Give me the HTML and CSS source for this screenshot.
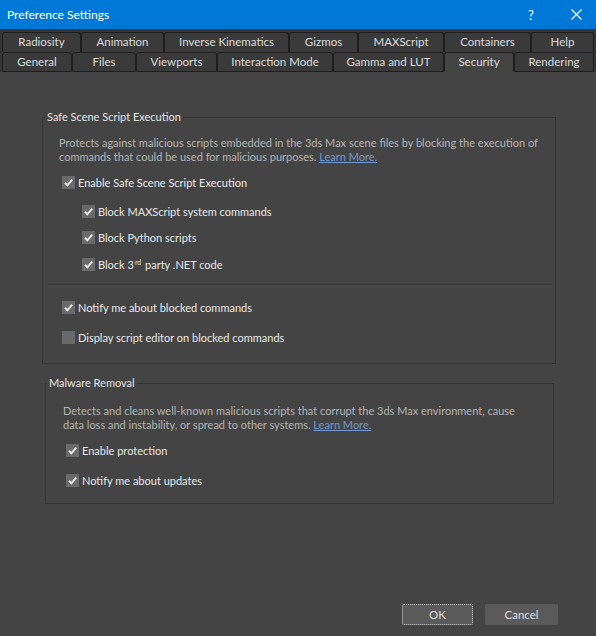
FILE: index.html
```html
<!DOCTYPE html>
<html lang="en">
<head>
<meta charset="utf-8">
<title>Preference Settings</title>
<link rel="stylesheet" href="styles.css">
</head>
<body>
<div class="window">
  <header class="titlebar">
    <span class="title">Preference Settings</span>
    <div class="caption">
      <span class="cap-btn cap-help">?</span>
      <span class="cap-btn cap-close"><svg width="11" height="11" viewBox="0 0 11 11"><path d="M0.5 0.5 10.5 10.5 M10.5 0.5 0.5 10.5" stroke="#fff" stroke-width="1.1" fill="none"/></svg></span>
    </div>
  </header>

  <nav class="tabs">
    <div class="tab-row row-back">
      <div class="tab">Radiosity</div>
      <div class="tab">Animation</div>
      <div class="tab">Inverse Kinematics</div>
      <div class="tab">Gizmos</div>
      <div class="tab">MAXScript</div>
      <div class="tab">Containers</div>
      <div class="tab">Help</div>
    </div>
    <div class="tab-row row-front">
      <div class="tab">General</div>
      <div class="tab">Files</div>
      <div class="tab">Viewports</div>
      <div class="tab">Interaction Mode</div>
      <div class="tab">Gamma and LUT</div>
      <div class="tab active">Security</div>
      <div class="tab">Rendering</div>
    </div>
  </nav>

  <main class="content">
    <fieldset class="group group-safe">
      <legend>Safe Scene Script Execution</legend>
      <p class="desc">Protects against malicious scripts embedded in the 3ds Max scene files by blocking the execution of<br>commands that could be used for malicious purposes. <a href="#">Learn More.</a></p>
      <label class="check row-main"><span class="box"><svg width="13" height="13" viewBox="0 0 13 13"><path d="M3 6.8 5.4 9.3 10.2 3.6" stroke="#e6e6e6" stroke-width="2" fill="none"/></svg></span><span>Enable Safe Scene Script Execution</span></label>
      <div class="sub">
        <label class="check row-sub"><span class="box"><svg width="13" height="13" viewBox="0 0 13 13"><path d="M3 6.8 5.4 9.3 10.2 3.6" stroke="#e6e6e6" stroke-width="2" fill="none"/></svg></span><span>Block MAXScript system commands</span></label>
        <label class="check row-sub"><span class="box"><svg width="13" height="13" viewBox="0 0 13 13"><path d="M3 6.8 5.4 9.3 10.2 3.6" stroke="#e6e6e6" stroke-width="2" fill="none"/></svg></span><span>Block Python scripts</span></label>
        <label class="check row-sub"><span class="box"><svg width="13" height="13" viewBox="0 0 13 13"><path d="M3 6.8 5.4 9.3 10.2 3.6" stroke="#e6e6e6" stroke-width="2" fill="none"/></svg></span><span>Block 3<sup>rd</sup> party .NET code</span></label>
      </div>
      <hr class="sep">
      <label class="check row-tall first"><span class="box"><svg width="13" height="13" viewBox="0 0 13 13"><path d="M3 6.8 5.4 9.3 10.2 3.6" stroke="#e6e6e6" stroke-width="2" fill="none"/></svg></span><span>Notify me about blocked commands</span></label>
      <label class="check row-tall"><span class="box"></span><span>Display script editor on blocked commands</span></label>
    </fieldset>

    <fieldset class="group group-malware">
      <legend>Malware Removal</legend>
      <p class="desc">Detects and cleans well-known malicious scripts that corrupt the 3ds Max environment, cause<br>data loss and instability, or spread to other systems. <a href="#">Learn More.</a></p>
      <label class="check row-tall"><span class="box"><svg width="13" height="13" viewBox="0 0 13 13"><path d="M3 6.8 5.4 9.3 10.2 3.6" stroke="#e6e6e6" stroke-width="2" fill="none"/></svg></span><span>Enable protection</span></label>
      <label class="check row-tall"><span class="box"><svg width="13" height="13" viewBox="0 0 13 13"><path d="M3 6.8 5.4 9.3 10.2 3.6" stroke="#e6e6e6" stroke-width="2" fill="none"/></svg></span><span>Notify me about updates</span></label>
    </fieldset>
  </main>

  <footer class="buttons">
    <button class="btn btn-ok" type="button">OK</button>
    <button class="btn btn-cancel" type="button">Cancel</button>
  </footer>
</div>
</body>
</html>
```

FILE: styles.css
```css
html, body {
  margin: 0;
  padding: 0;
  background: #444444;
}

body {
  font-family: Lato, "Noto Sans", sans-serif;
  font-size: 11px;
  color: #dcdcdc;
}

.window {
  width: 596px;
  height: 636px;
  display: flex;
  flex-direction: column;
  overflow: hidden;
}

/* Title bar */
.titlebar {
  height: 29px;
  flex: none;
  background: #0078d7;
  color: #ffffff;
  display: flex;
  align-items: center;
}

.title {
  flex: 1;
  padding-left: 7px;
  font-size: 12px;
}

.caption {
  display: flex;
  height: 100%;
}

.cap-btn {
  display: flex;
  align-items: center;
  justify-content: center;
  height: 100%;
}

.cap-help {
  width: 44px;
  margin-right: 3px;
  font-size: 13px;
}

.cap-close {
  width: 40px;
}

/* Tabs */
.tabs {
  flex: none;
  background: #353535;
  padding: 3px 2px 0;
}

.tab-row {
  display: grid;
  height: 20px;
}

.row-back {
  grid-template-columns: 79px 83px 125px 69px 86px 87px 63px;
}

.row-front {
  grid-template-columns: 70px 64px 81px 116px 111px 70px 80px;
}

.tab {
  background: #3a3a3a;
  border: 1px solid #1e1e1e;
  border-bottom: none;
  border-radius: 3px 3px 0 0;
  padding-bottom: 2px;
  box-sizing: border-box;
  display: flex;
  align-items: center;
  justify-content: center;
  color: #dcdcdc;
  font-size: 11.5px;
  white-space: nowrap;
}

.row-front .tab {
  border-bottom: 1px solid #1e1e1e;
  padding-bottom: 1px;
}

.row-front .tab.active {
  background: #444444;
  border-bottom-color: #444444;
}

/* Content */
.content {
  padding: 38px 0 0 42px;
}

.group {
  margin: 0;
  border: 1px solid #353535;
  box-sizing: border-box;
  min-width: 0;
}

.group legend {
  padding: 0 2px;
  line-height: 14px;
  color: #e4e4e4;
}

.group-safe {
  width: 514px;
  padding: 12px 0 11px;
}

.group-safe legend {
  margin-left: 2px;
}

.group-malware {
  width: 509px;
  margin: 12px 0 0 3px;
  padding: 14px 0 8px;
}

.group-malware legend {
  margin-left: 1px;
}

.desc {
  margin: 0;
  line-height: 13.5px;
  color: #b4b4b4;
  white-space: nowrap;
}

.group-safe .desc {
  margin: 0 0 6px 16px;
}

.group-malware .desc {
  margin: 0 0 4px 17px;
}

.desc a {
  color: #7198d2;
  text-decoration: underline;
}

.check {
  display: flex;
  align-items: center;
  gap: 3px;
  color: #e8e8e8;
  white-space: nowrap;
}

.check sup {
  font-size: 7px;
  line-height: 0;
  vertical-align: 4px;
  margin: 0 1px 0 1px;
}

.box {
  width: 13px;
  height: 13px;
  flex: none;
  background: #6a6a6a;
  display: flex;
}

.row-main {
  height: 26px;
  margin-left: 19px;
}

.sub {
  margin-top: 3px;
}

.row-sub {
  height: 26.5px;
  margin-left: 39px;
}

.sep {
  height: 0;
  margin: 6.5px 3px 0 5px;
  border: 0;
  border-top: 1px solid #333333;
  border-bottom: 1px solid #4c4c4c;
}

.row-tall {
  height: 30px;
  margin-left: 19px;
}

.row-tall.first {
  margin-top: 6px;
}

.group-malware .row-tall {
  margin-left: 20px;
}

/* Buttons */
.buttons {
  margin-top: auto;
  display: flex;
  justify-content: flex-end;
  gap: 12px;
  padding: 0 38px 11px 0;
}

.btn {
  height: 21px;
  padding: 0;
  border: none;
  border-radius: 2px;
  background: #5a5a5a;
  color: #dedede;
  font: inherit;
  font-size: 11.5px;
}

.btn-ok {
  width: 71px;
  outline: 1px dotted #cfcfcf;
  outline-offset: -1px;
}

.btn-cancel {
  width: 73px;
}
```
